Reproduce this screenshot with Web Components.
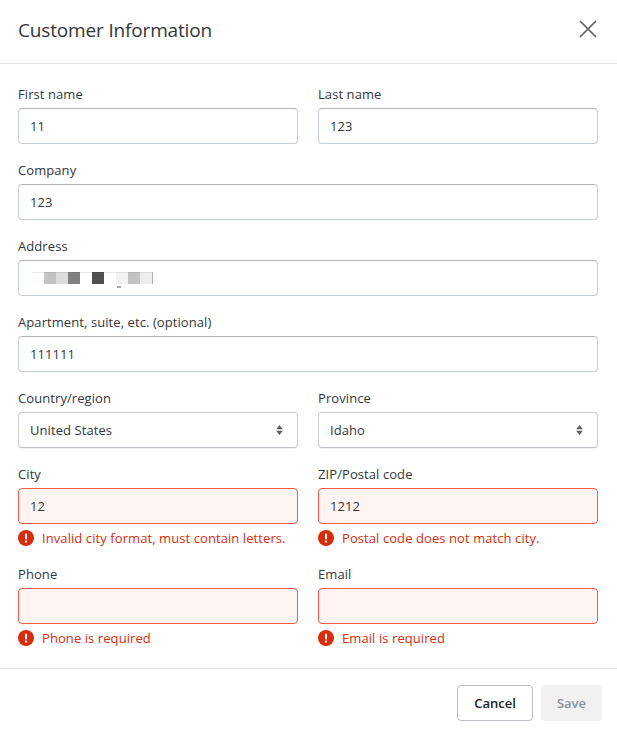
<!DOCTYPE html>
<html>
<head>
<meta charset="utf-8">
<title>Customer Information</title>
<style>
  html, body { margin: 0; background: #fff; }
  body { font-family: "Open Sans", "Noto Sans", sans-serif; color: #202223; }
</style>
</head>
<body>
<customer-modal>
  <span slot="title">Customer Information</span>

  <form-field label="First name" value="11"></form-field>
  <form-field label="Last name" value="123"></form-field>
  <form-field wide label="Company" value="123"></form-field>
  <form-field wide label="Address"><blur-patch></blur-patch></form-field>
  <form-field wide label="Apartment, suite, etc. (optional)" value="111111"></form-field>
  <form-field select label="Country/region" value="United States"></form-field>
  <form-field select label="Province" value="Idaho"></form-field>
  <form-field label="City" value="12" error="Invalid city format, must contain letters."></form-field>
  <form-field label="ZIP/Postal code" value="1212" error="Postal code does not match city."></form-field>
  <form-field label="Phone" error="Phone is required"></form-field>
  <form-field label="Email" error="Email is required"></form-field>

  <modal-button slot="footer">Cancel</modal-button>
  <modal-button slot="footer" disabled>Save</modal-button>
</customer-modal>

<script>
class CustomerModal extends HTMLElement {
    constructor() {
        super();
        this.shadowDOM = this.attachShadow({ mode: 'open' });
    }

    connectedCallback() {
        this.shadowDOM.innerHTML = `
        <style>
          :host { display: block; width: 617px; height: 733px; background: #fff; }
          header {
            box-sizing: border-box;
            height: 64px;
            border-bottom: 1px solid #e1e3e5;
            padding: 0 19px 3px 18px;
            display: flex;
            align-items: center;
            justify-content: space-between;
            font-size: 19px;
            line-height: 24px;
            letter-spacing: -.16px;
            color: #33363a;
          }
          header svg { display: block; width: 20px; height: 20px; margin-top: -3px; }
          .form {
            display: grid;
            grid-template-columns: 280px 280px;
            column-gap: 20px;
            row-gap: 16px;
            padding: 20px 19px 20px 18px;
            border-bottom: 1px solid #e1e3e5;
          }
          footer {
            display: flex;
            justify-content: flex-end;
            gap: 8px;
            padding: 16px 15px 12px 0;
          }
        </style>
        <header>
          <slot name="title"></slot>
          <svg viewBox="0 0 20 20" fill="none" stroke="#5c5f62" stroke-width="1.7">
            <path d="M2 2 18 18M18 2 2 18"/>
          </svg>
        </header>
        <div class="form"><slot></slot></div>
        <footer><slot name="footer"></slot></footer>
        `;
    }
}

class FormField extends HTMLElement {
    constructor() {
        super();
        this.shadowDOM = this.attachShadow({ mode: 'open' });
    }

    connectedCallback() {
        const value = this.getAttribute('value') || '';
        const error = this.getAttribute('error');
        const arrows = this.hasAttribute('select') ? `
          <svg class="arrows" viewBox="0 0 7 10" fill="#5c5f62">
            <path d="M3.5 0 6.8 4.2H.2zM3.5 10 .2 5.8H6.8z"/>
          </svg>` : '';
        const message = error ? `
          <div class="error">
            <svg viewBox="0 0 16 16">
              <circle cx="8" cy="8" r="8" fill="#d72c0d"/>
              <rect x="7" y="3.4" width="2" height="6" rx="1" fill="#fff"/>
              <circle cx="8" cy="11.6" r="1.15" fill="#fff"/>
            </svg>
            <span>${error}</span>
          </div>` : '';
        this.shadowDOM.innerHTML = `
        <style>
          :host { display: block; font-size: 13px; letter-spacing: .08px; color: #33363a; }
          :host([wide]) { grid-column: 1 / -1; }
          label { display: block; height: 20px; line-height: 20px; margin-bottom: 4px; }
          .box {
            box-sizing: border-box;
            height: 36px;
            padding: 0 11px;
            display: flex;
            align-items: center;
            justify-content: space-between;
            background: #fff;
            border: 1px solid #c4cdd5;
            border-top-color: #aeb4b9;
            border-radius: 4px;
          }
          :host([select]) .box {
            border-color: #c9cccf;
            border-bottom-color: #babfc3;
            box-shadow: 0 1px 0 rgba(0, 0, 0, .05);
          }
          :host([error]) .box { background: #fff4f4; border-color: #fd5749; }
          .arrows { width: 7px; height: 10px; margin-right: 3px; }
          .error {
            display: flex;
            align-items: center;
            gap: 8px;
            height: 20px;
            margin-top: 4px;
            color: #d72c0d;
          }
          .error svg { width: 16px; height: 16px; flex: none; }
        </style>
        <label>${this.getAttribute('label')}</label>
        <div class="box"><span>${value}<slot></slot></span>${arrows}</div>
        ${message}
        `;
    }
}

// the address value is pixelated in the screenshot
class BlurPatch extends HTMLElement {
    constructor() {
        super();
        this.shadowDOM = this.attachShadow({ mode: 'open' });
    }

    connectedCallback() {
        const shades = ['#fdfdfd', '#c4c4c4', '#dcdcdc', '#808080', '#fff', '#505050', '#fff', '#f2f2f2', '#c4c4c4', '#ededed'];
        this.shadowDOM.innerHTML = `
        <style>
          :host {
            position: relative;
            display: flex;
            height: 12px;
            margin-left: 2px;
            box-shadow: inset 1px 0 #e6e6e6;
            border-right: 1px solid #b0b0b0;
            width: 120px;
          }
          i { display: block; width: 12px; height: 12px; box-shadow: inset 0 1px rgba(0, 0, 0, .08); }
          .dot { position: absolute; left: 85px; top: 14px; width: 4px; height: 2px; background: #aaa; box-shadow: none; }
        </style>
        ${shades.map(c => `<i style="background:${c}"></i>`).join('')}
        <i class="dot"></i>
        `;
    }
}

class ModalButton extends HTMLElement {
    constructor() {
        super();
        this.shadowDOM = this.attachShadow({ mode: 'open' });
    }

    connectedCallback() {
        this.shadowDOM.innerHTML = `
        <style>
          :host {
            box-sizing: border-box;
            display: flex;
            align-items: center;
            height: 36px;
            padding: 0 16px;
            font-size: 13px;
            font-weight: 600;
            color: #202223;
            background: #fff;
            border: 1px solid #babfc3;
            border-radius: 4px;
          }
          :host([disabled]) {
            padding: 0 15px;
            color: #8c9196;
            background: #f1f1f1;
            border-color: #f1f1f1;
          }
        </style>
        <slot></slot>
        `;
    }
}

customElements.define('customer-modal', CustomerModal);
customElements.define('form-field', FormField);
customElements.define('blur-patch', BlurPatch);
customElements.define('modal-button', ModalButton);
</script>
</body>
</html>
